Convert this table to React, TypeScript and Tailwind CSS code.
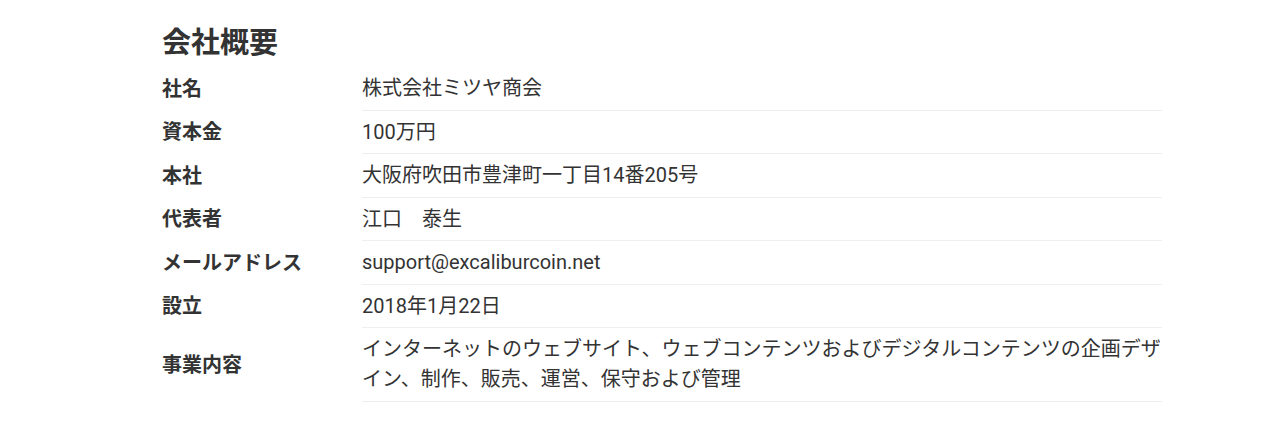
import React from "react";

const rows: { label: string; value: React.ReactNode }[] = [
  { label: "社名", value: "株式会社ミツヤ商会" },
  { label: "資本金", value: "100万円" },
  { label: "本社", value: "大阪府吹田市豊津町一丁目14番205号" },
  { label: "代表者", value: "江口\u3000泰生" },
  { label: "メールアドレス", value: "support@excaliburcoin.net" },
  { label: "設立", value: "2018年1月22日" },
  {
    label: "事業内容",
    value:
      "インターネットのウェブサイト、ウェブコンテンツおよびデジタルコンテンツの企画デザイン、制作、販売、運営、保守および管理",
  },
];

export default function App() {
  return (
    <div
      className="w-[1279px] h-[440px] bg-white text-[#333333] overflow-hidden"
      style={{ fontFamily: 'Roboto, "Noto Sans CJK JP", sans-serif' }}
    >
      <div className="ml-[162px] w-[1000px] pt-[22px]">
        <h2 className="text-[29px] leading-[42px] font-bold">会社概要</h2>
        <div className="flex flex-col mt-[3px]">
          {rows.map((r) => (
            <div key={r.label} className="flex">
              <div className="w-[200px] shrink-0 flex items-center text-[20px] leading-[30px] font-bold">
                {r.label}
              </div>
              <div className="flex-1 py-[6.25px] border-b border-[#eeeeee] text-[20px] leading-[30px]">
                {r.value}
              </div>
            </div>
          ))}
        </div>
      </div>
    </div>
  );
}
